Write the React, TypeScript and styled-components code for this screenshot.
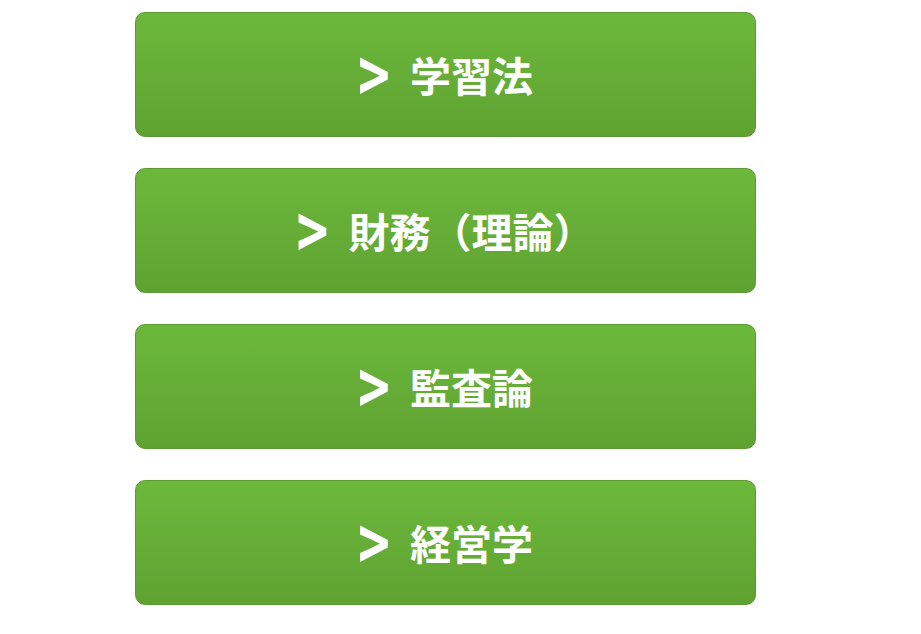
import React from 'react';
import styled, {createGlobalStyle} from 'styled-components';

const GlobalStyle = createGlobalStyle`
  html, body {
    margin: 0;
    padding: 0;
    background: #ffffff;
  }
  body {
    font-family: "Noto Sans CJK JP", "Noto Sans", sans-serif;
  }
`;

const Menu = styled.nav`
  display: flex;
  flex-direction: column;
  gap: 31px;
  padding: 12px 0 0 135px;
`;

const MenuButton = styled.a`
  display: flex;
  align-items: center;
  justify-content: center;
  box-sizing: border-box;
  width: 621px;
  height: 125px;
  border: 1px solid #5c9a34;
  border-radius: 10px;
  background: linear-gradient(to bottom, #6bb83b 0%, #66ae37 50%, #5fa231 100%);
  color: #ffffff;
  font-size: 41px;
  font-weight: 700;
  line-height: 1;
  text-decoration: none;
  cursor: pointer;
`;

// the chevron is drawn a bit taller than the font's own '>'
const Arrow = styled.span`
  font-size: 54px;
  line-height: 1;
  margin: 0 20px 0 0;
  transform-origin: 50% 64%;
  transform: scaleY(1.35);
`;

const links = ['学習法', '財務（理論）', '監査論', '経営学'];

function App() {
  return (
    <>
      <GlobalStyle/>
      <Menu>
        {links.map(label => <MenuButton key={label}><Arrow>&gt;</Arrow>{label}</MenuButton>)}
      </Menu>
    </>
  );
}

export default App;
